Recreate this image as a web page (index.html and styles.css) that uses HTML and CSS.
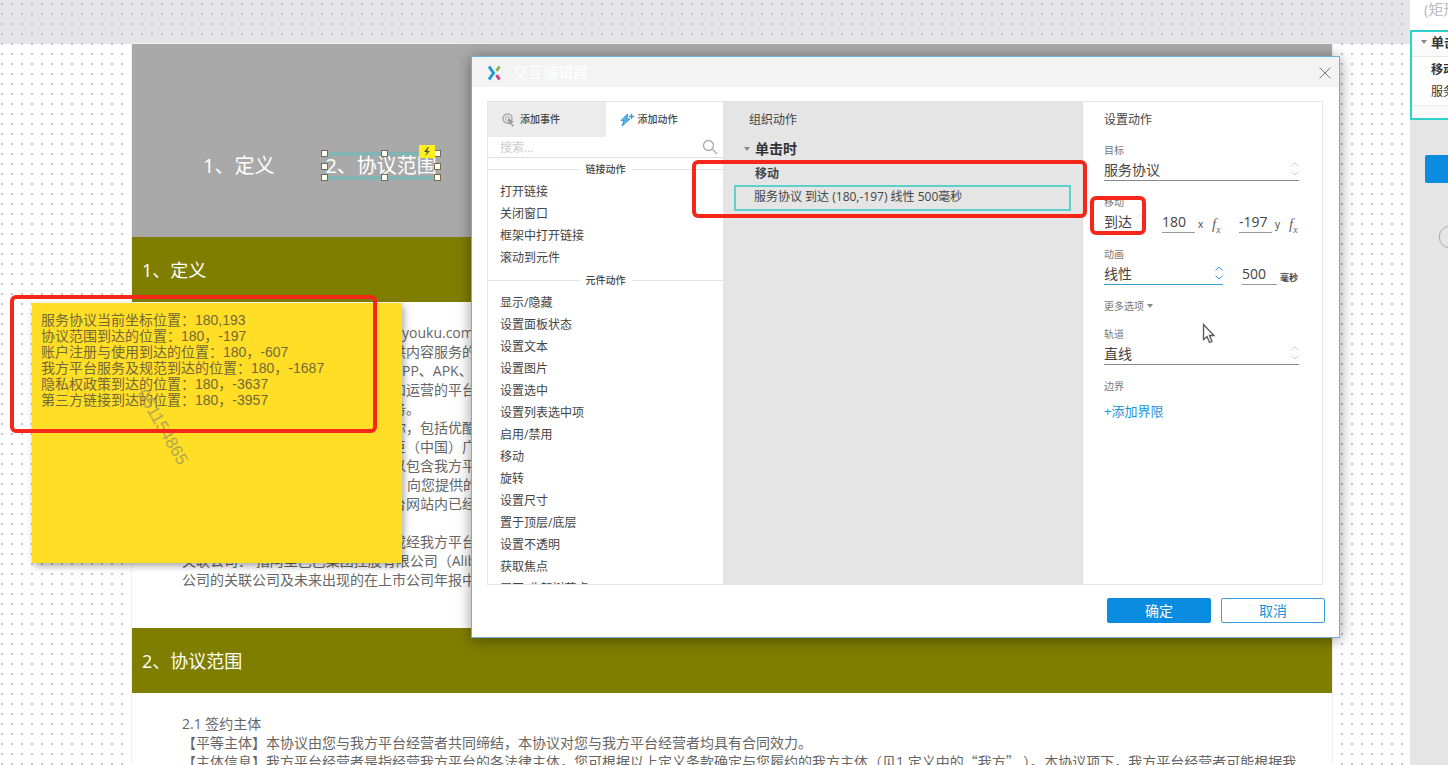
FILE: index.html
```html
<!DOCTYPE html>
<html lang="zh-CN">
<head>
<meta charset="utf-8">
<title>交互编辑器</title>
<link rel="stylesheet" href="styles.css">
</head>
<body>
<div class="workspace">
  <main class="canvas">
    <article class="page">
      <nav class="page-nav">
        <a class="nav-link" href="#s1">1、定义</a>
        <a class="nav-link selected" href="#s2">2、协议范围
          <i class="handle t l"></i><i class="handle t c"></i><i class="handle t r"></i>
          <i class="handle m l"></i><i class="handle m r"></i>
          <i class="handle b l"></i><i class="handle b c"></i><i class="handle b r"></i>
          <svg class="bolt" viewBox="0 0 16 13"><rect width="16" height="13" fill="#ffef1f"/><path d="M9 2 5 7h3l-2 4 5-5H8l2-4z" fill="#555530"/></svg>
        </a>
      </nav>
      <h2 class="section-title" id="s1">1、定义</h2>
      <section class="section-text">
        <div class="tail">
          <p class="flush">youku.com</p>
          <p>供内容服务的</p>
          <p class="flush">PP、APK、</p>
          <p>和运营的平台</p>
          <p>务。</p>
          <p>你，包括优酷</p>
          <p>巨（中国）广</p>
          <p>以包含我方平</p>
          <p class="indent">向您提供的</p>
          <p>台网站内已经</p>
          <p>&nbsp;</p>
          <p>或经我方平台</p>
        </div>
        <p>关联公司： 指阿里巴巴集团控股有限公司（Alibaba</p>
        <p>公司的关联公司及未来出现的在上市公司年报中</p>
      </section>
      <h2 class="section-title" id="s2">2、协议范围</h2>
      <section class="section-text">
        <p>2.1 签约主体</p>
        <p>【平等主体】本协议由您与我方平台经营者共同缔结，本协议对您与我方平台经营者均具有合同效力。</p>
        <p>【主体信息】我方平台经营者是指经营我方平台的各法律主体，您可根据以上定义条款确定与您履约的我方主体（见1.定义中的<span class="quoted">“我方”</span> ）。本协议项下，我方平台经营者可能根据我</p>
      </section>
    </article>
    <aside class="note">
      <p>服务协议当前坐标位置：180,193</p>
      <p>协议范围到达的位置：180，-197</p>
      <p>账户注册与使用到达的位置：180，-607</p>
      <p>我方平台服务及规范到达的位置：180，-1687</p>
      <p>隐私权政策到达的位置：180，-3637</p>
      <p>第三方链接到达的位置：180，-3957</p>
      <span class="watermark">051154865</span>
    </aside>
  </main>
  <aside class="inspector">
    <p class="shape-name">(矩形)</p>
    <div class="event-card">
      <h3><span class="tri"></span>单击时</h3>
      <div class="event-body"><strong>移动</strong><span>服务协议</span></div>
    </div>
    <button class="inspector-action" aria-label="新建交互"></button>
    <div class="pill"></div>
  </aside>
</div>

<div class="dialog" role="dialog" aria-labelledby="dlg-title">
  <header class="titlebar">
    <svg class="logo" viewBox="0 0 14 16"><path d="M2 1.500 6.500 8 2 14.500" fill="none" stroke="#1f9bd0" stroke-width="3"/><path d="M12.500 1.500 9.500 6" stroke="#86b84a" stroke-width="3"/><path d="M9.500 10l3 4.500" stroke="#d83a8c" stroke-width="3"/></svg>
    <h1 id="dlg-title">交互编辑器</h1>
    <button class="close" aria-label="关闭"><svg viewBox="0 0 12 12"><path d="M.5.5l11 11M11.500.5l-11 11" stroke="#777" fill="none"/></svg></button>
  </header>
  <div class="panes">
    <section class="pane-left">
      <div class="tabs">
        <button class="tab"><svg viewBox="0 0 14 14"><circle cx="5.500" cy="5.500" r="4.500" fill="none" stroke="#aaa" stroke-width="1.500"/><circle cx="5.500" cy="5.500" r="2" fill="none" stroke="#aaa"/><path d="M6 5l6 4-2.500.7L12 13l-1.500.5-2-3L7 12z" fill="#999"/></svg>添加事件</button>
        <button class="tab active"><svg viewBox="0 0 14 14"><path d="M7.500 1 1 7.500h3L2 13l8-7H7z" fill="#5cb3e4" stroke="#2d9bdc"/><path d="M11.500 1v5M9 3.500h5" stroke="#2d9bdc" stroke-width="1.300"/></svg>添加动作</button>
      </div>
      <div class="search"><input type="text" placeholder="搜索..." aria-label="搜索"><svg viewBox="0 0 16 16"><circle cx="6.500" cy="6.500" r="5" fill="none" stroke="#aaa" stroke-width="1.300"/><path d="M10.500 10.500 15 15" stroke="#aaa" stroke-width="1.300"/></svg></div>
      <div class="action-list">
        <h3>链接动作</h3>
        <ul><li>打开链接</li><li>关闭窗口</li><li>框架中打开链接</li><li>滚动到元件</li></ul>
        <h3>元件动作</h3>
        <ul><li>显示/隐藏</li><li>设置面板状态</li><li>设置文本</li><li>设置图片</li><li>设置选中</li><li>设置列表选中项</li><li>启用/禁用</li><li>移动</li><li>旋转</li><li>设置尺寸</li><li>置于顶层/底层</li><li>设置不透明</li><li>获取焦点</li><li>展开/收起树节点</li></ul>
      </div>
    </section>
    <section class="pane-mid">
      <h2>组织动作</h2>
      <h3><span class="tri"></span>单击时</h3>
      <h4>移动</h4>
      <div class="case">服务协议 到达 (180,-197) 线性 500毫秒</div>
    </section>
    <form class="pane-right">
      <h2>设置动作</h2>
      <div class="field">
        <label for="target">目标</label>
        <div class="select"><select id="target"><option>服务协议</option></select><svg viewBox="0 0 8 14"><path d="M.5 4.500 4 1l3.500 3.500M.5 9.500 4 13l3.500-3.500"/></svg></div>
      </div>
      <div class="field">
        <label for="move">移动</label>
        <div class="row">
          <div class="select bare"><select id="move"><option>到达</option></select><svg viewBox="0 0 8 14"><path d="M.5 4.500 4 1l3.500 3.500M.5 9.500 4 13l3.500-3.500"/></svg></div>
          <input id="mx" type="text" value="180"><label class="unit" for="mx">x</label><span class="fx">f<sub>x</sub></span>
          <input id="my" type="text" value="-197"><label class="unit" for="my">y</label><span class="fx">f<sub>x</sub></span>
        </div>
      </div>
      <div class="field">
        <label for="anim">动画</label>
        <div class="row">
          <div class="select focus"><select id="anim"><option>线性</option></select><svg viewBox="0 0 8 14"><path d="M.5 4.500 4 1l3.500 3.500M.5 9.500 4 13l3.500-3.500"/></svg></div>
          <input id="ms" class="time" type="text" value="500"><label class="ms" for="ms">毫秒</label>
        </div>
      </div>
      <button type="button" class="more">更多选项<span class="tri"></span></button>
      <div class="field">
        <label for="track">轨道</label>
        <div class="select"><select id="track"><option>直线</option></select><svg viewBox="0 0 8 14"><path d="M.5 4.500 4 1l3.500 3.500M.5 9.500 4 13l3.500-3.500"/></svg></div>
      </div>
      <div class="bounds"><span>边界</span><a href="#bounds">+添加界限</a></div>
    </form>
  </div>
  <footer class="buttons"><button class="ok">确定</button><button class="cancel">取消</button></footer>
</div>

<div class="mark mark-note"></div>
<div class="mark mark-case"></div>
<div class="mark mark-move"></div>
<svg class="pointer" viewBox="0 0 14 21"><path d="M1.500 1.500v15l3.500-3 2.500 6 2.500-1-2.500-6H12z" fill="#fff" stroke="#555" stroke-width="1.300"/></svg>
</body>
</html>
```
FILE: styles.css
```css
* { box-sizing: border-box; }
body, h1, h2, h3, h4, p, ul { margin: 0; padding: 0; }
body {
  position: relative;
  height: 100vh;
  overflow: hidden;
  font: 14px/19px "Open Sans", "Noto Sans CJK SC", sans-serif;
  color: #666;
}
ul { list-style: none; }
a { text-decoration: none; color: inherit; }
button, input, select {
  margin: 0;
  padding: 0;
  border: 0;
  border-radius: 0;
  background: none;
  font: inherit;
  color: inherit;
  outline: 0;
  appearance: none;
}
.tri {
  display: inline-block;
  border: 3px solid transparent;
  border-top: 4px solid #888;
  border-bottom: 0;
}

/* Canvas */
.workspace { display: flex; height: 100%; overflow: hidden; }
.canvas {
  position: relative;
  flex: 1;
  min-width: 0;
  overflow: hidden;
  padding: 44px 78px 0 132px;
  background:
    radial-gradient(circle, #c2c2d0 1px, transparent 1px) -3px -1px / 10px 10px,
    linear-gradient(#e5e5e7 44px, #fff 44px);
}
.page { background: #fff; box-shadow: 0 0 0 1px #f0f0f0; min-height: 800px; }
.page-nav {
  display: flex;
  align-items: flex-start;
  gap: 50px;
  height: 193px;
  padding: 108px 0 0 71px;
  background: #a9a9a9;
  color: #fff;
  font-size: 20px;
  line-height: 28px;
}
.nav-link { white-space: nowrap; }
.selected { position: relative; border: solid #83b4b4; border-width: 4px 1px; line-height: 20px; }
.handle { position: absolute; width: 7px; height: 7px; background: #fffdf0; border: 1px solid #766a50; }
.t { top: -6px; }
.m { top: 7px; }
.b { bottom: -5px; }
.l { left: -4px; }
.c { left: 50%; }
.r { right: -4px; }
.bolt { position: absolute; top: -11px; right: 2px; width: 16px; height: 13px; }
.section-title {
  height: 65px;
  padding-left: 10px;
  background: #807e00;
  color: #fff;
  font-size: 18px;
  font-weight: 400;
  line-height: 66px;
}
.section-text { padding: 21px 0 39px 50px; white-space: nowrap; overflow: hidden; }
.tail { padding-left: 210px; }
.flush { padding-left: 10px; }
.indent { padding-left: 15px; }
.quoted { font-family: "Noto Sans CJK SC", sans-serif; }

.note {
  position: absolute;
  top: 303px;
  left: 32px;
  width: 370px;
  height: 260px;
  padding: 9px;
  background: #ffde25;
  box-shadow: 2px 3px 7px rgba(0, 0, 0, .35);
  font: 14px/16px "Liberation Sans", "Noto Sans CJK SC", sans-serif;
  color: #75683a;
}
.watermark {
  position: absolute;
  top: 84px;
  left: 116px;
  transform-origin: 0 0;
  transform: rotate(60deg);
  font-size: 17px;
  color: #b5a650;
}

/* Inspector */
.inspector { width: 38px; overflow: hidden; background: #e5e5e5; white-space: nowrap; }
.shape-name { height: 30px; padding: 0 0 0 14px; background: #fff; color: #bbb; font-size: 15px; line-height: 18px; }
.event-card { width: 200px; height: 90px; border: 2px solid #2ed0ca; background: #fafafa; color: #333; font-size: 12px; }
.event-card h3 { height: 24px; padding-left: 9px; font-size: 13px; line-height: 21px; }
.event-card .tri { margin-right: 4px; vertical-align: 3px; }
.event-body { display: flex; flex-direction: column; height: 50px; padding: 2px 0 0 19px; border: solid #e8e8e8; border-width: 1px 0; background: #fff; line-height: 22px; }
.inspector-action { display: block; width: 100px; height: 28px; margin: 35px 0 0 15px; border-radius: 2px; background: #0a8ce0; }
.pill { width: 60px; height: 22px; margin: 43px 0 0 29px; border: 1px solid #aaa; border-radius: 10px; }

/* Dialog */
.dialog {
  position: absolute;
  top: 56px;
  left: 471px;
  right: 108px;
  border: 1px solid #74aed2;
  background: #fff;
  box-shadow: 0 2px 14px rgba(0, 0, 0, .4);
  color: #444;
  font-size: 12px;
}
.titlebar { display: flex; align-items: center; height: 30px; padding: 0 8px 0 15px; border-top: 1px solid #e6f6fd; background: #f3f3f3; }
.logo { width: 14px; height: 16px; margin-right: 12px; }
.titlebar h1 { flex: 1; font-size: 15px; font-weight: 400; color: #fff; }
.close { width: 12px; height: 12px; }
.close svg { display: block; }
.panes {
  display: grid;
  grid-template-columns: 235px 1fr 240px;
  height: 484px;
  margin: 14px 16px 0 15px;
  border: 1px solid #e4e4e4;
}
.pane-left { display: flex; flex-direction: column; min-height: 0; }
.tabs { display: flex; height: 35px; }
.tab { display: flex; flex: 1; align-items: center; gap: 4px; padding-left: 14px; background: #ececec; font-size: 10px; font-weight: 500; }
.tab svg { width: 14px; height: 14px; }
.tab.active { background: #fff; }
.search { display: flex; align-items: center; height: 21px; padding: 0 5px 0 12px; border-bottom: 1px solid #ddd; }
.search input { flex: 1; min-width: 0; }
.search input::placeholder { color: #ccc; }
.search svg { width: 16px; height: 16px; }
.action-list { flex: 1; min-height: 0; overflow: hidden; line-height: 22px; }
.action-list h3 { display: flex; align-items: center; gap: 6px; font-size: 10px; font-weight: 500; }
.action-list h3::before, .action-list h3::after { content: ""; flex: 1; height: 1px; background: #e2e2e2; }
.action-list ul { padding: 1px 0 0 12px; }
.pane-mid { padding: 8px 11px 0 11px; background: #e5e5e5; }
.pane-mid h2, .pane-right h2 { font-size: 12px; font-weight: 400; line-height: 20px; }
.pane-mid h2 { padding-left: 15px; }
.pane-mid h3 { padding: 8px 0 0 10px; font-size: 14px; font-weight: 700; line-height: 22px; color: #333; }
.pane-mid .tri { margin-right: 5px; vertical-align: 3px; }
.pane-mid h4 { padding: 4px 0 0 21px; font-size: 12px; line-height: 20px; }
.case { height: 26px; margin-top: 1px; padding-left: 18px; border: 2px solid #5cd0ca; line-height: 20px; }

.pane-right { display: flex; flex-direction: column; gap: 14px; padding: 9px 23px 0 21px; border-left: 1px solid #ddd; }
.pane-right h2 { line-height: 18px; }
.field { display: flex; flex-direction: column; gap: 2px; }
.field > label, .bounds span, .more { font-size: 10px; line-height: 14px; color: #777; }
.row { display: flex; height: 22px; }
.row > * { flex: none; }
.row input { width: 33px; height: 22px; border-bottom: 1px solid #999; font-size: 14px; }
.select { position: relative; display: flex; height: 22px; border-bottom: 1px solid #888; }
.select select { flex: 1; font-size: 14px; line-height: 20px; }
.select svg { position: absolute; top: 3px; right: 0; width: 8px; height: 14px; fill: none; stroke: #ccc; }
.row .bare { width: 40px; margin-right: 18px; border-color: transparent; }
.bare svg { stroke: #e6e6e6; }
.row .focus { width: 119px; margin-right: 19px; border-color: #3a9fd0; }
.focus svg { stroke: #2d9bdc; }
.row .unit { width: 10px; padding: 6px 0 0 3px; font-size: 10px; line-height: 14px; }
.row .fx { width: 34px; padding: 5px 0 0 7px; font: italic 15px/17px "Liberation Serif", serif; color: #666; }
.row .fx:last-child { width: 17px; }
.fx sub { font-size: 10px; line-height: 1px; }
.row .time { width: 35px; }
.row .ms { padding: 8px 0 0 3px; font-size: 9px; font-weight: 700; line-height: 14px; white-space: nowrap; }
.more { display: flex; align-items: center; gap: 3px; }
.bounds { display: flex; flex-direction: column; align-items: flex-start; gap: 9px; }
.bounds a { font-size: 13px; line-height: 18px; color: #1b93d6; }

.buttons { display: flex; justify-content: flex-end; gap: 10px; padding: 13px 14px 14px; }
.buttons button { width: 104px; height: 25px; border: 1px solid #3aa0dc; border-radius: 2px; font-size: 14px; line-height: 20px; color: #1b93d6; }
.buttons .ok { background: #0a8ce0; border-color: #0a8ce0; color: #fff; }

/* Annotations */
.mark { position: absolute; border: 4px solid #f5261a; border-radius: 6px; }
.mark-note { top: 295px; left: 10px; width: 367px; height: 138px; }
.mark-case { top: 160px; left: 692px; width: 395px; height: 58px; }
.mark-move { top: 196px; left: 1090px; width: 56px; height: 39px; }
.pointer { position: absolute; top: 323px; left: 1202px; width: 14px; height: 21px; }
```
